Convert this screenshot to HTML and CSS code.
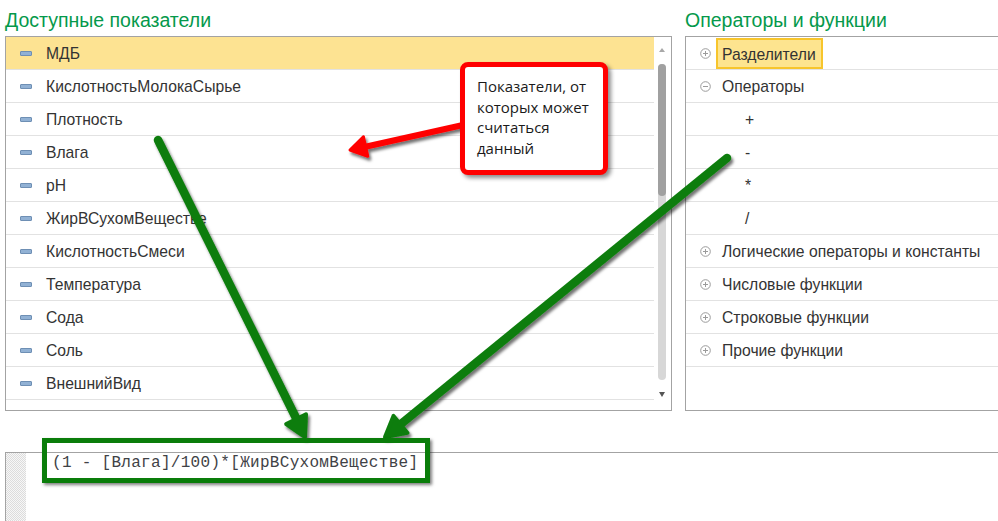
FILE: index.html
```html
<!DOCTYPE html>
<html lang="ru">
<head>
<meta charset="utf-8">
<title>Конструктор формулы</title>
<link rel="stylesheet" href="styles.css">
</head>
<body>
<div class="page">
  <div class="top">
    <section class="col col-left">
      <h2 class="title">Доступные показатели</h2>
      <div class="panel">
        <ul class="list">
          <li class="row row-selected"><span class="dash"></span><span class="label">МДБ</span></li>
          <li class="row"><span class="dash"></span><span class="label">КислотностьМолокаСырье</span></li>
          <li class="row"><span class="dash"></span><span class="label">Плотность</span></li>
          <li class="row"><span class="dash"></span><span class="label">Влага</span></li>
          <li class="row"><span class="dash"></span><span class="label">pH</span></li>
          <li class="row"><span class="dash"></span><span class="label">ЖирВСухомВеществе</span></li>
          <li class="row"><span class="dash"></span><span class="label">КислотностьСмеси</span></li>
          <li class="row"><span class="dash"></span><span class="label">Температура</span></li>
          <li class="row"><span class="dash"></span><span class="label">Сода</span></li>
          <li class="row"><span class="dash"></span><span class="label">Соль</span></li>
          <li class="row"><span class="dash"></span><span class="label">ВнешнийВид</span></li>
        </ul>
        <div class="scrollbar">
          <span class="sb-arrow sb-up"></span>
          <div class="sb-track"><div class="sb-thumb"></div></div>
          <span class="sb-arrow sb-down"></span>
        </div>
      </div>
    </section>
    <section class="col col-right">
      <h2 class="title">Операторы и функции</h2>
      <div class="panel panel-open">
        <ul class="list tree">
          <li class="row"><svg class="exp" viewBox="0 0 11 11"><circle cx="5.5" cy="5.5" r="4.8"/><path d="M3 5.5h5M5.5 3v5"/></svg><span class="label-box">Разделители</span></li>
          <li class="row"><svg class="exp" viewBox="0 0 11 11"><circle cx="5.5" cy="5.5" r="4.8"/><path d="M3 5.5h5"/></svg><span class="label">Операторы</span></li>
          <li class="row child"><span class="label">+</span></li>
          <li class="row child"><span class="label">-</span></li>
          <li class="row child"><span class="label">*</span></li>
          <li class="row child"><span class="label">/</span></li>
          <li class="row"><svg class="exp" viewBox="0 0 11 11"><circle cx="5.5" cy="5.5" r="4.8"/><path d="M3 5.5h5M5.5 3v5"/></svg><span class="label">Логические операторы и константы</span></li>
          <li class="row"><svg class="exp" viewBox="0 0 11 11"><circle cx="5.5" cy="5.5" r="4.8"/><path d="M3 5.5h5M5.5 3v5"/></svg><span class="label">Числовые функции</span></li>
          <li class="row"><svg class="exp" viewBox="0 0 11 11"><circle cx="5.5" cy="5.5" r="4.8"/><path d="M3 5.5h5M5.5 3v5"/></svg><span class="label">Строковые функции</span></li>
          <li class="row"><svg class="exp" viewBox="0 0 11 11"><circle cx="5.5" cy="5.5" r="4.8"/><path d="M3 5.5h5M5.5 3v5"/></svg><span class="label">Прочие функции</span></li>
        </ul>
      </div>
    </section>
  </div>
  <div class="editor">
    <div class="gutter"></div>
    <div class="code">(1 - [Влага]/100)*[ЖирВСухомВеществе]</div>
  </div>

  <svg class="overlay" viewBox="0 0 998 521" width="998" height="521">
    <defs>
      <filter id="sh" x="-20%" y="-20%" width="140%" height="140%">
        <feDropShadow dx="2" dy="3" stdDeviation="1.8" flood-color="#000" flood-opacity="0.55"/>
      </filter>
    </defs>
    <g filter="url(#sh)">
      <g class="arrow-green">
        <line x1="158" y1="140" x2="299" y2="424"/>
        <polygon points="305,437 306,414.2 286.2,424"/>
      </g>
      <g class="arrow-green">
        <line x1="727" y1="158" x2="396" y2="428"/>
        <polygon points="385,437 407.5,432.9 393.5,415.9"/>
      </g>
      <g class="arrow-red">
        <line x1="463" y1="125" x2="362" y2="147.5"/>
        <polygon points="350,150 367.8,156.3 363.4,136.7"/>
      </g>
    </g>
  </svg>

  <div class="callout">Показатели, от которых может считаться данный</div>
  <div class="code-frame"></div>
</div>
</body>
</html>
```

FILE: styles.css
```css
* { box-sizing: border-box; }

html, body {
  margin: 0;
  padding: 0;
  background: #ffffff;
}

body {
  font-family: "Liberation Sans", Arial, sans-serif;
  color: #333333;
  width: 998px;
  height: 521px;
  overflow: hidden;
}

.page {
  position: relative;
  width: 998px;
  height: 521px;
  overflow: hidden;
}

.top {
  display: grid;
  grid-template-columns: 667px 330px;
  column-gap: 13px;
  padding-left: 5px;
}

.title {
  margin: 0;
  padding-top: 9px;
  height: 36px;
  font-size: 19.5px;
  line-height: 22px;
  font-weight: normal;
  color: #05994b;
  white-space: nowrap;
}

.panel {
  display: flex;
  height: 375px;
  border: 1px solid #a3a3a3;
  background: #ffffff;
}

.panel-open {
  border-right: none;
}

.list {
  list-style: none;
  margin: 0;
  padding: 0;
  width: 648px;
}

.tree {
  width: 100%;
}

.row {
  display: flex;
  align-items: center;
  height: 33px;
  border-bottom: 1px solid #e2e2e2;
  padding-left: 14px;
  font-size: 15.7px;
  white-space: nowrap;
}

.label {
  padding-top: 2px;
}

.row-selected {
  background: #fde392;
}

.dash {
  width: 12px;
  height: 5px;
  border: 1px solid #6e8fb4;
  border-radius: 1px;
  background: #91b1d4;
  margin-right: 14px;
  flex: none;
}

.exp {
  width: 11px;
  height: 11px;
  flex: none;
  margin-right: 11px;
  fill: none;
  stroke: #9b9b9b;
  stroke-width: 1;
}

.label-box {
  margin-left: -6px;
  padding: 1px 5px 0 4px;
  height: 31px;
  line-height: 27px;
  border: 2px solid #f7c52c;
  background: #fde48f;
  margin-top: 1px;
}

.child {
  padding-left: 59px;
}

.scrollbar {
  width: 16px;
  display: flex;
  flex-direction: column;
  align-items: center;
}

.sb-arrow {
  width: 0;
  height: 0;
  border-left: 3px solid transparent;
  border-right: 3px solid transparent;
  flex: none;
}

.sb-up {
  margin-top: 11px;
  border-bottom: 4px solid #a8a8a8;
}

.sb-down {
  margin-top: 12px;
  border-top: 5px solid #555555;
}

.sb-track {
  margin-top: 12px;
  width: 8px;
  height: 316px;
  border-radius: 4px;
  background: #d7d7d7;
}

.sb-thumb {
  height: 132px;
  border-radius: 4px;
  background: #a0a0a0;
}

.editor {
  display: flex;
  margin: 41px 0 0 5px;
  height: 70px;
  border-top: 1px solid #a3a3a3;
  border-left: 1px solid #a3a3a3;
}

.gutter {
  width: 20px;
  background-color: #f4f4f4;
  background-image: repeating-conic-gradient(#dcdcdc 0 25%, #f7f7f7 0 50%);
  background-size: 2px 2px;
}

.code {
  padding: 0 0 0 26px;
  font-family: "Liberation Mono", "Courier New", monospace;
  font-size: 16px;
  line-height: 20px;
  letter-spacing: 0.3px;
  color: #3f4246;
  white-space: pre;
}

.overlay {
  position: absolute;
  left: 0;
  top: 0;
  pointer-events: none;
}

.arrow-green line {
  stroke: #0a7d0a;
  stroke-width: 8.5;
  stroke-linecap: round;
}

.arrow-green polygon {
  fill: #0a7d0a;
  stroke: #0a7d0a;
  stroke-width: 4;
  stroke-linejoin: round;
}

.arrow-red line {
  stroke: #ff0000;
  stroke-width: 6;
  stroke-linecap: round;
}

.arrow-red polygon {
  fill: #ff0000;
  stroke: #ff0000;
  stroke-width: 3;
  stroke-linejoin: round;
}

.callout {
  position: absolute;
  left: 460px;
  top: 62px;
  width: 148px;
  height: 113px;
  padding: 9px 6px 0 12px;
  border: 5px solid #ff0000;
  border-radius: 8px;
  background: #ffffff;
  box-shadow: 3px 3px 4px rgba(0, 0, 0, 0.45);
  font-family: "Open Sans", "Noto Sans", sans-serif;
  font-size: 15px;
  line-height: 20.7px;
  color: #1a1a1a;
}

.code-frame {
  position: absolute;
  left: 42px;
  top: 438px;
  width: 388px;
  height: 45px;
  border: 5px solid #0a7d0a;
  box-shadow: 2px 2px 3px rgba(0, 0, 0, 0.5);
}
```
